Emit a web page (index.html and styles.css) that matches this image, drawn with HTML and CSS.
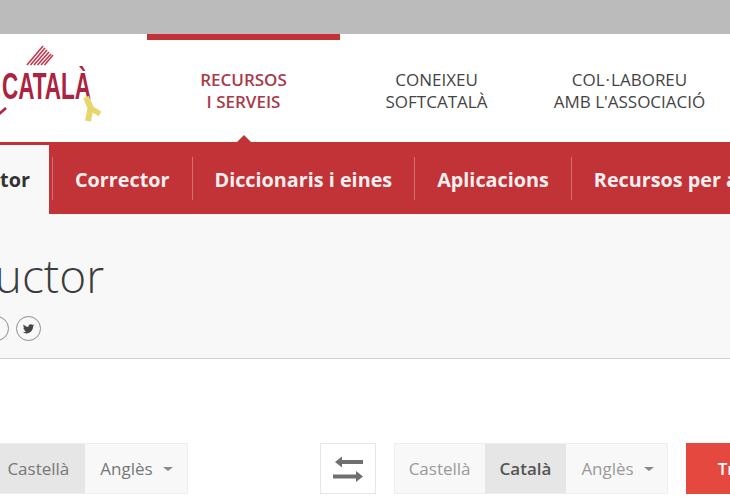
FILE: index.html
```html
<!DOCTYPE html>
<html lang="ca">
<head>
<meta charset="utf-8">
<title>Traductor</title>
<link rel="stylesheet" href="styles.css">
</head>
<body>
<div class="topbar"></div>
<header class="header">
  <a class="logo">
    <svg width="147" height="108" viewBox="0 0 147 108">
      <g stroke="#c0394f" stroke-width="1.6" fill="none">
        <path d="M27 31 L43 12"/><path d="M30.500 31 L45 14"/><path d="M34 31 L47 16"/><path d="M37.500 31 L49 18"/><path d="M41 31 L51 20"/><path d="M44.500 31 L53 21"/>
      </g>
      <text x="2" y="65" class="logo-text" textLength="89" lengthAdjust="spacingAndGlyphs">CATALÀ</text>
      <path d="M-2 81 L6 74" stroke="#b5203f" stroke-width="2.5" fill="none"/>
      <g stroke="#e8d66a" fill="none">
        <path d="M86 63 L92 77" stroke-width="6"/>
        <path d="M92 75 L100 80" stroke-width="5.500"/>
        <path d="M91 72 L88 87" stroke-width="6"/>
      </g>
    </svg>
  </a>
  <nav class="mainnav">
    <a class="mainnav-item is-active">RECURSOS<br>I SERVEIS</a>
    <a class="mainnav-item">CONEIXEU<br>SOFTCATALÀ</a>
    <a class="mainnav-item">COL<span class="middot">·</span>LABOREU<br>AMB L'ASSOCIACIÓ</a>
  </nav>
</header>
<nav class="subnav">
  <a class="tab">Traductor</a>
  <a class="subnav-item">Corrector</a>
  <a class="subnav-item">Diccionaris i eines</a>
  <a class="subnav-item">Aplicacions</a>
  <a class="subnav-item">Recursos per a tothom</a>
</nav>
<section class="band">
  <h1 class="title">Traductor</h1>
  <div class="social">
    <span class="social-btn"></span>
    <span class="social-btn">
      <svg width="13" height="13" viewBox="0 0 24 24"><path fill="#444" d="M22.46 6c-.77.35-1.6.58-2.46.69.88-.53 1.56-1.37 1.88-2.38-.83.5-1.75.85-2.72 1.05C18.37 4.5 17.26 4 16 4c-2.35 0-4.27 1.92-4.27 4.29 0 .34.04.67.11.98C8.28 9.09 5.11 7.38 3 4.79c-.37.63-.58 1.37-.58 2.15 0 1.49.75 2.81 1.91 3.56-.71 0-1.37-.2-1.95-.5v.03c0 2.08 1.48 3.82 3.44 4.21a4.22 4.22 0 0 1-1.93.07 4.28 4.28 0 0 0 4 2.98 8.521 8.521 0 0 1-5.33 1.84c-.34 0-.68-.02-1.02-.06C3.44 20.29 5.7 21 8.12 21 16 21 20.33 14.46 20.33 8.79c0-.19 0-.37-.01-.56.84-.6 1.56-1.36 2.14-2.23z"/></svg>
    </span>
  </div>
</section>
<section class="langs">
  <div class="langgroup langgroup-source">
    <span class="lang">Català</span>
    <span class="lang is-on">Castellà</span>
    <span class="lang lang-more">Anglès <i class="caret"></i></span>
  </div>
  <button class="swap">
    <svg width="32" height="28" viewBox="0 0 32 28">
      <path fill="#6f6f6f" d="M3 7 L10 1.500 V5 H31 V9 H10 V12.500 Z"/>
      <path fill="#6f6f6f" d="M31 21.500 L24 16 V19.500 H1 V23.500 H24 V27 Z"/>
    </svg>
  </button>
  <div class="langgroup langgroup-target">
    <span class="lang">Castellà</span>
    <span class="lang is-on is-strong">Català</span>
    <span class="lang lang-more">Anglès <i class="caret"></i></span>
  </div>
  <button class="go">Traduir</button>
</section>
</body>
</html>
```
FILE: styles.css
```css
* { box-sizing: border-box; }
html, body { margin: 0; padding: 0; height: 500px; overflow: hidden; }
body { width: 730px; background: #fff; font-family: "Open Sans", "Noto Sans", sans-serif; color: #444; }

.topbar { height: 34px; background: #bbbbbb; }

.header { display: flex; height: 108px; background: #fff; }
.logo { flex: 0 0 147px; height: 108px; }
.logo svg { display: block; }
.logo-text { font-family: "Liberation Sans", sans-serif; font-size: 36px; font-weight: 700; fill: #ab2340; }

.mainnav { display: flex; flex: none; }
.mainnav-item {
  position: relative;
  width: 193px;
  padding-top: 35px;
  text-align: center;
  font-size: 17px;
  line-height: 22px;
  color: #444;
  white-space: nowrap;
}
.mainnav-item.is-active { border-top: 6px solid #c23338; padding-top: 29px; color: #a93a4a; font-weight: 600; }
.mainnav-item.is-active::after {
  content: "";
  position: absolute;
  left: 50%;
  bottom: 0;
  margin-left: -7px;
  border-left: 7px solid transparent;
  border-right: 7px solid transparent;
  border-bottom: 7px solid #c23338;
}
.middot { padding: 0 1px; }

.subnav { display: flex; height: 72px; background: #c23338; white-space: nowrap; width: 730px; overflow: hidden; }
.tab {
  flex: none;
  margin: 3px 3px 0 -87px;
  width: 136px;
  padding-left: 19px;
  background: #f8f8f8;
  color: #333;
  font-size: 19.8px;
  font-weight: 700;
  line-height: 69px;
}
.subnav-item {
  flex: none;
  height: 43px;
  margin-top: 15px;
  padding: 0 22px;
  border-left: 1px solid rgba(255, 255, 255, .3);
  color: #f8efef;
  font-size: 19.8px;
  font-weight: 700;
  line-height: 46px;
}

.band { height: 145px; background: #f8f8f8; border-bottom: 1px solid #cfcfcf; padding-top: 30px; overflow: hidden; }
.title { margin: 0 0 0 -99px; font-size: 46px; font-weight: 300; line-height: 62px; color: #3c3c3c; white-space: nowrap; }
.social { display: flex; gap: 7px; margin: 10px 0 0 -16px; }
.social-btn {
  display: flex;
  align-items: center;
  justify-content: center;
  width: 25px;
  height: 25px;
  border: 1px solid #8d8d8d;
  border-radius: 50%;
}

.langs { display: flex; align-items: stretch; height: 51px; margin: 84px 0 0 -88px; width: 1000px; font-size: 17px; }
.langgroup { display: flex; flex: none; border: 1px solid #eeeeee; background: #f8f8f8; }
.langgroup-target { margin-left: 18px; }
.lang { display: flex; align-items: center; padding: 0 15px; color: #9a9a9a; white-space: nowrap; }
.langgroup-source .lang { color: #777; }
.langgroup-source .is-on { padding-right: 16px; }
.langgroup-target .lang:first-child { padding: 0 14px; }
.lang.is-on { background: #e6e6e6; }
.lang.is-strong { color: #555; font-weight: 600; }
.lang-more { gap: 8px; padding-right: 14px; }
.langgroup-target .lang-more { padding-right: 13px; }
.caret { width: 0; height: 0; border-left: 5px solid transparent; border-right: 5px solid transparent; border-top: 4px solid #888; margin-left: 2px; }
.swap { flex: none; display: flex; align-items: center; justify-content: center; width: 56px; margin-left: 132px; padding: 0; border: 1px solid #e6e6e6; background: #fff; }
.go { flex: none; width: 130px; margin-left: 18px; padding: 0 0 0 32px; text-align: left; border: 0; background: #e4483f; color: #fff; font: 600 17px "Open Sans", sans-serif; }
```
